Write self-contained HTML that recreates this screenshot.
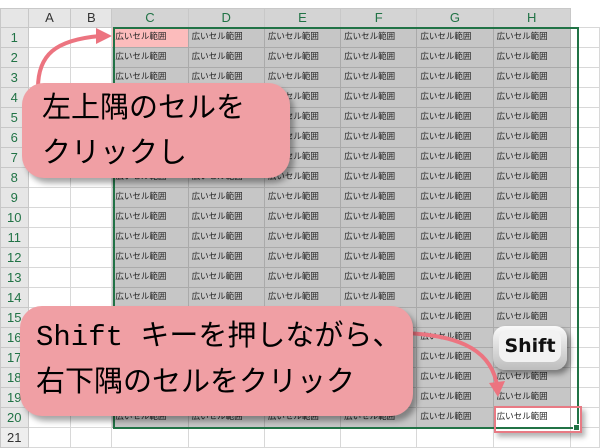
<!DOCTYPE html>
<html><head><meta charset="utf-8"><style>
body{margin:0;width:600px;height:445px;overflow:hidden;background:#fff;position:relative;font-family:"Liberation Sans","Noto Sans CJK JP",sans-serif}
table{position:absolute;left:0;top:8px;border-collapse:collapse;table-layout:fixed}
tr{height:20px}
td{height:19px;max-height:19px;border:1px solid #d8d8d8;padding:0 0 0 3px;font-size:8.5px;color:#222;white-space:nowrap;overflow:hidden;line-height:14px;vertical-align:top;box-sizing:border-box}
tr.h{height:19px}
tr.h td{height:19px;background:#e6e6e6;text-align:center;font-size:13px;line-height:18px;color:#333;border-color:#c8c8c8;padding:0;vertical-align:middle}
tr.h td.s{background:#d4d4d4;color:#217346}
td.r{background:#e6e6e6;text-align:center;font-size:13px;line-height:18px;color:#217346;padding:0;border-color:#c8c8c8;vertical-align:middle}
td.g{background:#c6c6c6;border-color:#aaa;padding-top:1px}
td.p{background:#fcbcbc}
.sel{position:absolute;left:113px;top:27px;width:462px;height:398px;border:2px solid #217346}
.c{position:absolute;background:#f09fa4;border-radius:22px;box-shadow:4px 5px 6px rgba(0,0,0,.35);font-family:"Liberation Mono","Noto Sans CJK JP",monospace;color:#000}
</style></head><body>
<table>
<colgroup><col style="width:28px"><col style="width:44px"><col style="width:42px"><col style="width:77px"><col style="width:77px"><col style="width:77px"><col style="width:77px"><col style="width:77px"><col style="width:78px"><col style="width:30px"></colgroup>
<tr class="h"><td></td><td>A</td><td>B</td><td class="s">C</td><td class="s">D</td><td class="s">E</td><td class="s">F</td><td class="s">G</td><td class="s">H</td><td style="background:#fff;border:none"></td></tr>
<tr><td class="r">1</td><td></td><td></td><td class="g p">広いセル範囲</td><td class="g">広いセル範囲</td><td class="g">広いセル範囲</td><td class="g">広いセル範囲</td><td class="g">広いセル範囲</td><td class="g">広いセル範囲</td><td></td></tr>
<tr><td class="r">2</td><td></td><td></td><td class="g">広いセル範囲</td><td class="g">広いセル範囲</td><td class="g">広いセル範囲</td><td class="g">広いセル範囲</td><td class="g">広いセル範囲</td><td class="g">広いセル範囲</td><td></td></tr>
<tr><td class="r">3</td><td></td><td></td><td class="g">広いセル範囲</td><td class="g">広いセル範囲</td><td class="g">広いセル範囲</td><td class="g">広いセル範囲</td><td class="g">広いセル範囲</td><td class="g">広いセル範囲</td><td></td></tr>
<tr><td class="r">4</td><td></td><td></td><td class="g">広いセル範囲</td><td class="g">広いセル範囲</td><td class="g">広いセル範囲</td><td class="g">広いセル範囲</td><td class="g">広いセル範囲</td><td class="g">広いセル範囲</td><td></td></tr>
<tr><td class="r">5</td><td></td><td></td><td class="g">広いセル範囲</td><td class="g">広いセル範囲</td><td class="g">広いセル範囲</td><td class="g">広いセル範囲</td><td class="g">広いセル範囲</td><td class="g">広いセル範囲</td><td></td></tr>
<tr><td class="r">6</td><td></td><td></td><td class="g">広いセル範囲</td><td class="g">広いセル範囲</td><td class="g">広いセル範囲</td><td class="g">広いセル範囲</td><td class="g">広いセル範囲</td><td class="g">広いセル範囲</td><td></td></tr>
<tr><td class="r">7</td><td></td><td></td><td class="g">広いセル範囲</td><td class="g">広いセル範囲</td><td class="g">広いセル範囲</td><td class="g">広いセル範囲</td><td class="g">広いセル範囲</td><td class="g">広いセル範囲</td><td></td></tr>
<tr><td class="r">8</td><td></td><td></td><td class="g">広いセル範囲</td><td class="g">広いセル範囲</td><td class="g">広いセル範囲</td><td class="g">広いセル範囲</td><td class="g">広いセル範囲</td><td class="g">広いセル範囲</td><td></td></tr>
<tr><td class="r">9</td><td></td><td></td><td class="g">広いセル範囲</td><td class="g">広いセル範囲</td><td class="g">広いセル範囲</td><td class="g">広いセル範囲</td><td class="g">広いセル範囲</td><td class="g">広いセル範囲</td><td></td></tr>
<tr><td class="r">10</td><td></td><td></td><td class="g">広いセル範囲</td><td class="g">広いセル範囲</td><td class="g">広いセル範囲</td><td class="g">広いセル範囲</td><td class="g">広いセル範囲</td><td class="g">広いセル範囲</td><td></td></tr>
<tr><td class="r">11</td><td></td><td></td><td class="g">広いセル範囲</td><td class="g">広いセル範囲</td><td class="g">広いセル範囲</td><td class="g">広いセル範囲</td><td class="g">広いセル範囲</td><td class="g">広いセル範囲</td><td></td></tr>
<tr><td class="r">12</td><td></td><td></td><td class="g">広いセル範囲</td><td class="g">広いセル範囲</td><td class="g">広いセル範囲</td><td class="g">広いセル範囲</td><td class="g">広いセル範囲</td><td class="g">広いセル範囲</td><td></td></tr>
<tr><td class="r">13</td><td></td><td></td><td class="g">広いセル範囲</td><td class="g">広いセル範囲</td><td class="g">広いセル範囲</td><td class="g">広いセル範囲</td><td class="g">広いセル範囲</td><td class="g">広いセル範囲</td><td></td></tr>
<tr><td class="r">14</td><td></td><td></td><td class="g">広いセル範囲</td><td class="g">広いセル範囲</td><td class="g">広いセル範囲</td><td class="g">広いセル範囲</td><td class="g">広いセル範囲</td><td class="g">広いセル範囲</td><td></td></tr>
<tr><td class="r">15</td><td></td><td></td><td class="g">広いセル範囲</td><td class="g">広いセル範囲</td><td class="g">広いセル範囲</td><td class="g">広いセル範囲</td><td class="g">広いセル範囲</td><td class="g">広いセル範囲</td><td></td></tr>
<tr><td class="r">16</td><td></td><td></td><td class="g">広いセル範囲</td><td class="g">広いセル範囲</td><td class="g">広いセル範囲</td><td class="g">広いセル範囲</td><td class="g">広いセル範囲</td><td class="g">広いセル範囲</td><td></td></tr>
<tr><td class="r">17</td><td></td><td></td><td class="g">広いセル範囲</td><td class="g">広いセル範囲</td><td class="g">広いセル範囲</td><td class="g">広いセル範囲</td><td class="g">広いセル範囲</td><td class="g">広いセル範囲</td><td></td></tr>
<tr><td class="r">18</td><td></td><td></td><td class="g">広いセル範囲</td><td class="g">広いセル範囲</td><td class="g">広いセル範囲</td><td class="g">広いセル範囲</td><td class="g">広いセル範囲</td><td class="g">広いセル範囲</td><td></td></tr>
<tr><td class="r">19</td><td></td><td></td><td class="g">広いセル範囲</td><td class="g">広いセル範囲</td><td class="g">広いセル範囲</td><td class="g">広いセル範囲</td><td class="g">広いセル範囲</td><td class="g">広いセル範囲</td><td></td></tr>
<tr><td class="r">20</td><td></td><td></td><td class="g">広いセル範囲</td><td class="g">広いセル範囲</td><td class="g">広いセル範囲</td><td class="g">広いセル範囲</td><td class="g">広いセル範囲</td><td class="g" style="background:#fff">広いセル範囲</td><td></td></tr>
<tr><td class="r" style="color:#333;background:#eee">21</td><td></td><td></td><td></td><td></td><td></td><td></td><td></td><td></td><td></td></tr>
</table>
<div class="sel"></div>
<div style="position:absolute;left:494px;top:406px;width:84px;height:23px;border:2px solid #e87a84;box-shadow:3px 4px 5px rgba(0,0,0,.3)"></div>
<div style="position:absolute;left:573px;top:424px;width:5px;height:5px;background:#217346;border:1px solid #fff"></div>
<svg style="position:absolute;left:0;top:0" width="600" height="445">
<path d="M38 88 C38 55 55 40 100 36" fill="none" stroke="#ec7480" stroke-width="4"/>
<polygon points="96,28 112,36 96,44" fill="#ec7480"/>
<path d="M405 333 C450 335 490 345 497 385" fill="none" stroke="#ec7480" stroke-width="4"/>
<polygon points="489,383 498,397 505,381" fill="#ec7480"/>
</svg>
<div class="c" style="left:22px;top:83px;width:268px;height:95px;font-size:29px;line-height:45px;padding:4px 0 0 20px;box-sizing:border-box">左上隅のセルを<br>クリックし</div>
<div class="c" style="left:20px;top:306px;width:393px;height:110px;font-size:29px;line-height:46px;padding:9px 0 0 16px;box-sizing:border-box">Shift キーを押しながら、<br>右下隅のセルをクリック</div>
<div style="position:absolute;left:493px;top:326px;width:74px;height:44px;border-radius:12px;background:linear-gradient(#fafafa,#bdbdbd);box-shadow:3px 4px 6px rgba(0,0,0,.4)"></div>
<div style="position:absolute;left:499px;top:330px;width:62px;height:32px;border-radius:9px;background:#f2f2f2;font:bold 19px 'DejaVu Sans',sans-serif;text-align:center;line-height:32px;color:#111">Shift</div>
</body></html>
